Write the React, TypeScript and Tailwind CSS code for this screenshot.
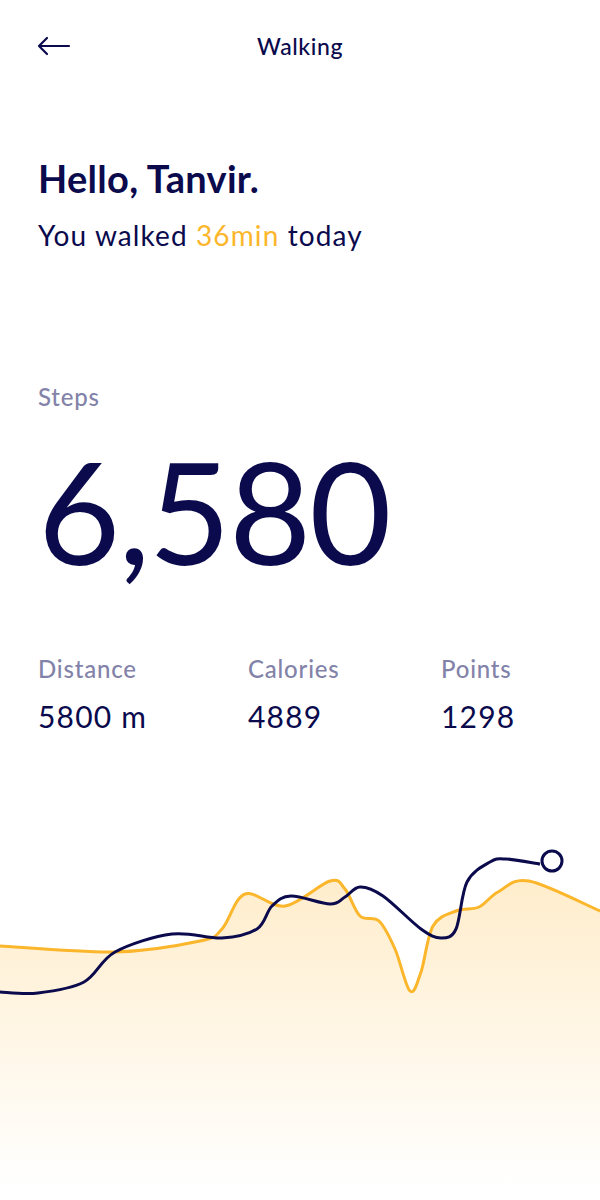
type Pt = [number, number];

// catmull-rom -> cubic bezier so the lines come out smooth
function smooth(pts: Pt[]) {
  let d = `M${pts[0][0]},${pts[0][1]}`;
  for (let i = 0; i < pts.length - 1; i++) {
    const p0 = pts[i - 1] || pts[i];
    const p1 = pts[i];
    const p2 = pts[i + 1];
    const p3 = pts[i + 2] || p2;
    const c1x = p1[0] + (p2[0] - p0[0]) / 6;
    const c1y = p1[1] + (p2[1] - p0[1]) / 6;
    const c2x = p2[0] - (p3[0] - p1[0]) / 6;
    const c2y = p2[1] - (p3[1] - p1[1]) / 6;
    d += ` C${c1x.toFixed(1)},${c1y.toFixed(1)} ${c2x.toFixed(1)},${c2y.toFixed(1)} ${p2[0]},${p2[1]}`;
  }
  return d;
}

// y values relative to chart top (page y 850)
const yellow: Pt[] = [
  [0, 97], [115, 103], [200, 92], [222, 80], [245, 45], [285, 57], [330, 32],
  [345, 40], [360, 67], [379, 72], [395, 100], [410, 142], [421, 123],
  [433, 77], [456, 62], [479, 58], [498, 43], [529, 32], [600, 62],
];

const navy: Pt[] = [
  [0, 143], [38, 144], [84, 133], [115, 103], [172, 85], [222, 89], [257, 80],
  [272, 57], [291, 47], [330, 55], [345, 48], [360, 38], [383, 47], [421, 80],
  [441, 89], [456, 80], [467, 33], [490, 13], [506, 10], [540, 15],
];

const stats = [
  { label: "Distance", value: "5800 m" },
  { label: "Calories", value: "4889" },
  { label: "Points", value: "1298" },
];

function Chart() {
  const line = smooth(yellow);
  const area = `${line} L600,338 L0,338 Z`;
  return (
    <svg viewBox="0 0 600 340" className="w-full h-[340px] block">
      <defs>
        <linearGradient id="fill" x1="0" y1="0" x2="0" y2="1">
          <stop offset="0" stopColor="#ffedcc" />
          <stop offset="1" stopColor="#ffffff" />
        </linearGradient>
      </defs>
      <path d={area} fill="url(#fill)" />
      <path d={line} fill="none" stroke="#fbb62b" strokeWidth="3" />
      <path d={smooth(navy)} fill="none" stroke="#0a0a4d" strokeWidth="3" />
      <circle cx="552" cy="12" r="10" fill="#fff" stroke="#0a0a4d" strokeWidth="3" />
    </svg>
  );
}

export default function App() {
  return (
    <div className="w-[600px] h-[1200px] bg-white text-[#0a0a4d] font-['Lato',sans-serif] flex flex-col overflow-hidden">
      <div className="relative flex items-center justify-center h-[46px] mt-[23px]">
        <svg viewBox="0 0 34 20" className="absolute left-[37px] w-[34px] h-[20px]" fill="none" stroke="#0a0a4d" strokeWidth="2.2" strokeLinecap="round" strokeLinejoin="round">
          <path d="M32 10H2M10 2L2 10l8 8" />
        </svg>
        <h1 className="text-[23px] font-medium tracking-[0.6px]">Walking</h1>
      </div>

      <div className="px-[38px] mt-[90px]">
        <h2 className="text-[38px] font-bold leading-none tracking-[0.3px]">Hello, Tanvir.</h2>
        <p className="text-[28px] mt-[24px] leading-none tracking-[1.1px]">
          You walked <span className="text-[#fbb62b]">36min</span> today
        </p>
      </div>

      <div className="px-[38px] mt-[136px]">
        <p className="text-[24px] text-[#8383a9] font-medium leading-none tracking-[0.8px]">Steps</p>
        <p className="text-[142px] leading-none mt-[30px] tracking-[-2px]">6,580</p>
      </div>

      <div className="flex px-[38px] mt-[76px]">
        {stats.map((s, i) => (
          <div key={s.label} className={i === 0 ? "w-[210px]" : i === 1 ? "w-[193px]" : ""}>
            <p className="text-[24px] text-[#8383a9] font-medium leading-none tracking-[0.8px]">{s.label}</p>
            <p className="text-[30px] mt-[20px] leading-none tracking-[1.2px]">{s.value}</p>
          </div>
        ))}
      </div>

      <div className="mt-[118px]">
        <Chart />
      </div>
    </div>
  );
}
